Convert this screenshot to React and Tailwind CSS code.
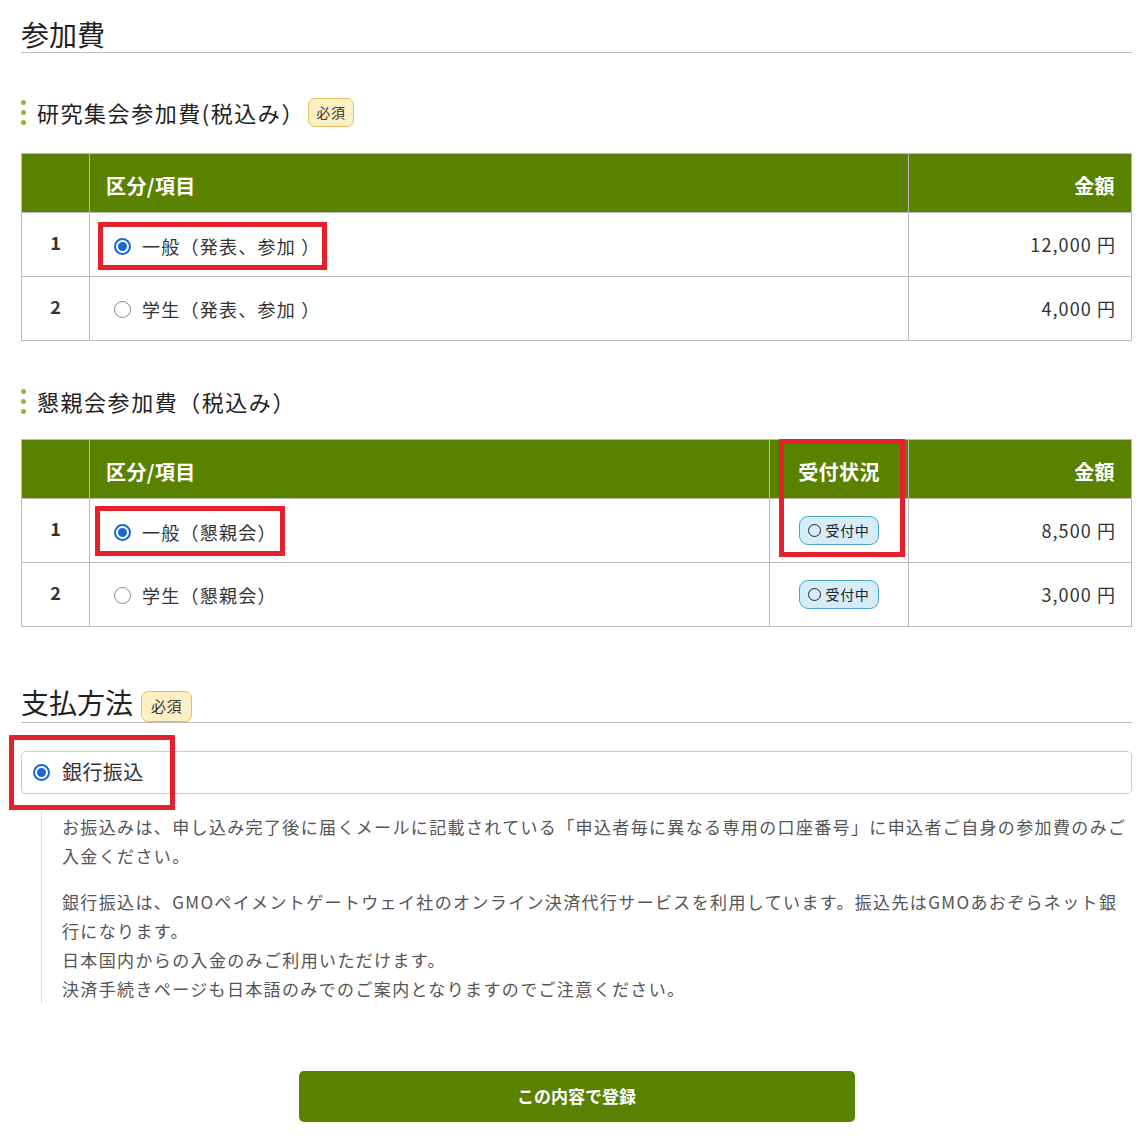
import React from "react";

const FONT = { fontFamily: '"Noto Sans CJK JP", "Noto Sans", sans-serif' };

function Radio({ checked }) {
  if (checked) {
    return (
      <span className="w-[17px] h-[17px] rounded-full border-2 border-[#1a66d8] bg-white flex items-center justify-center shrink-0">
        <span className="w-[9px] h-[9px] rounded-full bg-[#1a66d8]" />
      </span>
    );
  }
  return <span className="w-[17px] h-[17px] rounded-full border border-[#8a8a8a] bg-white shrink-0" />;
}

function Dots() {
  return (
    <span className="flex flex-col gap-[5px] mr-[11px]">
      <span className="w-[5px] h-[5px] rounded-full bg-[#93b53b]" />
      <span className="w-[5px] h-[5px] rounded-full bg-[#93b53b]" />
      <span className="w-[5px] h-[5px] rounded-full bg-[#93b53b]" />
    </span>
  );
}

function Required({ big }) {
  return (
    <span
      className={
        big
          ? "inline-flex items-center justify-center h-[31px] w-[51px] rounded-[7px] border border-[#e6c05a] bg-[#fdf0c4] text-[15px] tracking-[0.04em] text-[#333]"
          : "inline-flex items-center justify-center h-[29px] w-[46px] rounded-[7px] border border-[#e6c05a] bg-[#fdf0c4] text-[14px] tracking-[0.04em] text-[#333]"
      }
    >
      必須
    </span>
  );
}

function Status() {
  return (
    <span className="inline-flex items-center justify-center w-[80px] h-[29px] rounded-[9px] border border-[#4aa3d8] bg-[#d6edf9] text-[14px] tracking-[0.05em] text-[#222]">
      <span className="w-[13px] h-[13px] rounded-full border-[1.5px] border-[#222] mr-[4px]" />
      受付中
    </span>
  );
}

function Label({ checked, text, box }) {
  return (
    <span className="relative inline-flex items-center h-[25px] mt-[3px]">
      <Radio checked={checked} />
      <span className="ml-[11px] text-[18px] tracking-[0.07em] text-[#333]">{text}</span>
      {box && (
        <span
          className="absolute border-[5px] border-[#e6212e] pointer-events-none"
          style={{ left: box[0], top: box[1], right: box[2], bottom: box[3] }}
        />
      )}
    </span>
  );
}

function SubHeading({ children, badge }) {
  return (
    <div className="flex items-center h-[32px]">
      <Dots />
      <span className="text-[22px] tracking-[0.07em] text-[#222]">{children}</span>
      {badge && <span className="ml-[3px]"><Required /></span>}
    </div>
  );
}

const th = "border border-[#bbb] text-white font-bold text-[20px] h-[59px] pt-[6px] tracking-[0.02em]";
const td = "border border-[#bbb] h-[64px] text-[18px] text-[#333]";
const num = td + " text-center font-bold pb-[4px]";
const price = td + " text-right pr-[15px] tracking-[0.06em]";

export default function App() {
  return (
    <div style={FONT} className="bg-white pl-[21px] pr-[10px] pt-[16px] pb-[18px] text-[#333]">
      <h2 className="text-[28px] leading-[36px] text-[#222] border-b border-[#bbb]">参加費</h2>

      <div className="mt-[43px]">
        <SubHeading badge>研究集会参加費(税込み）</SubHeading>
      </div>

      <table className="mt-[25px] w-full border-collapse table-fixed">
        <colgroup>
          <col className="w-[68px]" />
          <col />
          <col className="w-[223px]" />
        </colgroup>
        <thead>
          <tr className="bg-[#598200]">
            <th className={th}></th>
            <th className={th + " text-left pl-[16px]"}>区分/項目</th>
            <th className={th + " text-right pr-[16px]"}>金額</th>
          </tr>
        </thead>
        <tbody>
          <tr>
            <td className={num}>1</td>
            <td className={td + " pl-[24px]"}>
              <Label checked text="一般（発表、参加 ）" box={[-16, -12, -6, -11]} />
            </td>
            <td className={price}>12,000 円</td>
          </tr>
          <tr>
            <td className={num}>2</td>
            <td className={td + " pl-[24px]"}>
              <Label text="学生（発表、参加 ）" />
            </td>
            <td className={price}>4,000 円</td>
          </tr>
        </tbody>
      </table>

      <div className="mt-[44px]">
        <SubHeading>懇親会参加費（税込み）</SubHeading>
      </div>

      <div className="relative mt-[22px]">
        <table className="w-full border-collapse table-fixed">
          <colgroup>
            <col className="w-[68px]" />
            <col />
            <col className="w-[139px]" />
            <col className="w-[223px]" />
          </colgroup>
          <thead>
            <tr className="bg-[#598200]">
              <th className={th}></th>
              <th className={th + " text-left pl-[16px]"}>区分/項目</th>
              <th className={th + " text-center"}>受付状況</th>
              <th className={th + " text-right pr-[16px]"}>金額</th>
            </tr>
          </thead>
          <tbody>
            <tr>
              <td className={num}>1</td>
              <td className={td + " pl-[24px]"}>
                <Label checked text="一般（懇親会）" box={[-19, -14, -8, -11]} />
              </td>
              <td className={td + " text-center"}><Status /></td>
              <td className={price}>8,500 円</td>
            </tr>
            <tr>
              <td className={num}>2</td>
              <td className={td + " pl-[24px]"}>
                <Label text="学生（懇親会）" />
              </td>
              <td className={td + " text-center"}><Status /></td>
              <td className={price}>3,000 円</td>
            </tr>
          </tbody>
        </table>
        <span className="absolute left-[758px] top-0 w-[126px] h-[118px] border-[5px] border-[#e6212e] pointer-events-none" />
      </div>

      <h2 className="mt-[55px] flex items-center text-[28px] leading-[36px] text-[#222] border-b border-[#bbb]">
        支払方法
        <span className="ml-[8px]"><Required big /></span>
      </h2>

      <div className="relative mt-[28px] h-[43px] border border-[#ccc] rounded-[5px] flex items-center pl-[11px]">
        <Radio checked />
        <span className="ml-[12px] text-[20px] tracking-[0.02em] text-[#333]">銀行振込</span>
        <span className="absolute left-[-13px] top-[-17px] w-[166px] h-[75px] border-[5px] border-[#e6212e] pointer-events-none" />
      </div>

      <div className="mt-[18px] ml-[20px] border-l border-dotted border-[#bbb] pl-[20px] text-[17px] leading-[29px] tracking-[0.08em] text-[#555]">
        <p>お振込みは、申し込み完了後に届くメールに記載されている「申込者毎に異なる専用の口座番号」に申込者ご自身の参加費のみご入金ください。</p>
        <p className="mt-[17px]">
          銀行振込は、GMOペイメントゲートウェイ社のオンライン決済代行サービスを利用しています。振込先はGMOあおぞらネット銀行になります。
          <br />
          日本国内からの入金のみご利用いただけます。
          <br />
          決済手続きページも日本語のみでのご案内となりますのでご注意ください。
        </p>
      </div>

      <div className="mt-[68px] flex justify-center">
        <button className="w-[556px] h-[51px] rounded-[5px] bg-[#598200] text-white font-bold text-[17px]">
          この内容で登録
        </button>
      </div>
    </div>
  );
}
